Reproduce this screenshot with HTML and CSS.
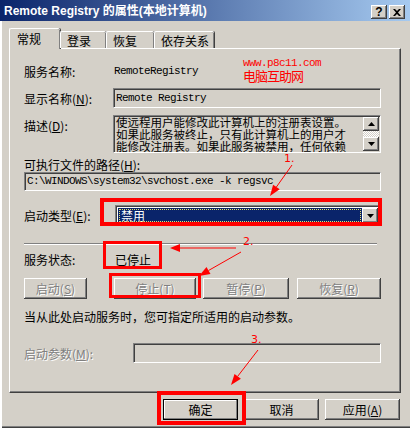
FILE: index.html
```html
<!DOCTYPE html>
<html lang="zh-CN">
<head>
  <meta charset="UTF-8" />
  <title>Remote Registry 的属性(本地计算机)</title>
  <link rel="stylesheet" href="styles.css">
</head>
<body>
  <div class="window">
    <div class="titlebar">
      <span class="title">Remote Registry 的属性(本地计算机)</span>
      <div class="caption-btns">
        <span class="cbtn help">?</span>
        <span class="cbtn">
          <svg width="8" height="7" viewBox="0 0 8 7"><path d="M0 0h2l2 2 2-2h2L5 3.5 8 7H6L4 5 2 7H0l3-3.5z" fill="#000"/></svg>
        </span>
      </div>
    </div>

    <div class="dlg">
      <div class="tabs">
        <div class="tab active">常规</div>
        <div class="tab">登录</div>
        <div class="tab w48">恢复</div>
        <div class="tab w60">依存关系</div>
      </div>

      <div class="panel">
        <div class="row r-name">
          <span class="lbl">服务名称:</span>
          <span class="mono val">RemoteRegistry</span>
        </div>

        <div class="row r-disp">
          <span class="lbl">显示名称(<u>N</u>):</span>
          <div class="edit mono w-main">Remote Registry</div>
        </div>

        <div class="row r-desc">
          <span class="lbl">描述(<u>D</u>):</span>
          <div class="edit memo w-main">
            <div class="memo-text">
              <div>使远程用户能修改此计算机上的注册表设置。</div>
              <div>如果此服务被终止，只有此计算机上的用户才</div>
              <div>能修改注册表。如果此服务被禁用，任何依赖</div>
            </div>
            <div class="vscroll">
              <span class="sbtn"><svg width="7" height="4" viewBox="0 0 7 4"><path d="M3.5 0L7 4H0z"/></svg></span>
              <span class="track"></span>
              <span class="sbtn"><svg width="7" height="4" viewBox="0 0 7 4"><path d="M0 0h7L3.5 4z"/></svg></span>
            </div>
          </div>
        </div>

        <div class="row r-pathlbl">可执行文件的路径(<u>H</u>):</div>

        <div class="row r-path">
          <div class="edit mono w-full">C:\WINDOWS\system32\svchost.exe -k regsvc</div>
        </div>

        <div class="row r-start">
          <span class="lbl">启动类型(<u>E</u>):</span>
          <div class="combo">
            <div class="combo-sel"><span class="focus">禁用</span></div>
            <span class="sbtn drop"><svg width="7" height="4" viewBox="0 0 7 4"><path d="M0 0h7L3.5 4z"/></svg></span>
          </div>
        </div>

        <div class="sep"></div>

        <div class="row r-status">
          <span class="lbl">服务状态:</span>
          <span class="status">已停止</span>
        </div>

        <div class="row r-btns">
          <span class="btn off b-start">启动(<u>S</u>)</span>
          <span class="btn off b-stop">停止(<u>T</u>)</span>
          <span class="btn off b-pause">暂停(<u>P</u>)</span>
          <span class="btn off b-resume">恢复(<u>R</u>)</span>
        </div>

        <div class="row r-hint">当从此处启动服务时，您可指定所适用的启动参数。</div>

        <div class="row r-params">
          <span class="lbl lbl-wide off">启动参数(<u>M</u>):</span>
          <div class="edit w-param"></div>
        </div>
      </div>

      <div class="actions">
        <span class="btn default">确定</span>
        <span class="btn">取消</span>
        <span class="btn">应用(<u>A</u>)</span>
      </div>
    </div>

    <div class="watermark">
      <div class="mono">www.p8c11.com</div>
      <div class="wm-cn">电脑互助网</div>
    </div>

    <!-- red annotations drawn over the dialog -->
    <svg class="notes" width="410" height="428" viewBox="0 0 410 428">
      <g fill="none" stroke="#f00">
        <rect x="102" y="200" width="278" height="24" stroke-width="4"/>
        <rect x="104.5" y="242.5" width="56" height="25" stroke-width="3"/>
        <rect x="110.5" y="274.5" width="89" height="22" stroke-width="3"/>
        <rect x="159" y="393" width="85" height="30" stroke-width="4"/>
        <path d="M292 165L276.4 187M236 248H179M241 252L208.5 270.5M258 350L237.7 376.3" stroke-width="1"/>
      </g>
      <g fill="#f00">
        <polygon points="270,196 279.7,189.3 273.1,184.7"/>
        <polygon points="170,248 180,244 180,252"/>
        <polygon points="199,276 210.5,274 206.5,267"/>
        <polygon points="231,385 240.9,378.7 234.5,373.9"/>
      </g>
      <g fill="#f00" font-family="DejaVu Sans, sans-serif" font-size="11">
        <text x="284" y="162">1.</text>
        <text x="243" y="245">2.</text>
        <text x="251" y="343">3.</text>
      </g>
    </svg>
  </div>
</body>
</html>
```

FILE: styles.css
```css
* {
  box-sizing: border-box;
}

body {
  margin: 0;
  font-family: "Noto Sans CJK SC", "Liberation Sans", sans-serif;
  font-size: 12px;
  color: #000;
  background-color: #d4d0c8;
}

u {
  text-decoration: underline;
}

.mono {
  font-family: "Liberation Mono", "Noto Sans CJK SC", monospace;
  font-size: 11px;
  letter-spacing: -0.6px;
}

.window {
  position: relative;
  width: 410px;
  height: 428px;
  overflow: hidden;
  background-color: #d4d0c8;
  box-shadow: inset 2px 0 #fff, inset 0 -1px #404040, inset 0 -2px #808080;
}

/* title bar */
.titlebar {
  height: 21px;
  display: flex;
  align-items: center;
  padding-left: 4px;
  background: linear-gradient(to right, #0a246a, #a6caf0);
  color: white;
}

.title {
  font-family: "Liberation Sans", "Noto Sans CJK SC", sans-serif;
  font-weight: bold;
  font-size: 12px;
  line-height: 14px;
  margin-top: 1px;
}

.caption-btns {
  margin-left: auto;
  margin-right: 5px;
  margin-top: 3px;
  display: flex;
  gap: 2px;
}

.cbtn {
  width: 16px;
  height: 14px;
  display: flex;
  align-items: center;
  justify-content: center;
  background-color: #d4d0c8;
  box-shadow: inset -1px -1px #404040, inset 1px 1px #fff, inset -2px -2px #808080;
  color: #000;
}

.cbtn.help {
  font-family: "Liberation Sans", sans-serif;
  font-weight: bold;
  font-size: 12px;
  line-height: 14px;
}

/* dialog body */
.dlg {
  padding: 7px 9px 0;
}

.tabs {
  display: flex;
  align-items: flex-end;
  height: 20px;
  position: relative;
  z-index: 1;
}

.tab {
  width: 46px;
  height: 17px;
  padding: 1px 0 0 6px;
  line-height: 15px;
  border-top: 1px solid #fff;
  border-left: 1px solid #fff;
  border-radius: 2px 2px 0 0;
  box-shadow: inset -1px 0 #808080, 1px 0 #404040;
}

.tab.w48 {
  width: 48px;
}

.tab.w60 {
  width: 60px;
}

.tab.active {
  width: 51px;
  height: 21px;
  padding: 2px 0 0 7px;
  margin-bottom: -1px;
  background-color: #d4d0c8;
}

.panel {
  height: 345px;
  padding-left: 14px;
  border-top: 1px solid #fff;
  border-left: 1px solid #fff;
  border-right: 1px solid #404040;
  border-bottom: 1px solid #404040;
  box-shadow: inset -1px -1px #808080;
  display: flex;
  flex-direction: column;
}

.row {
  display: flex;
  align-items: center;
  flex: none;
}

.lbl {
  width: 89px;
  flex: none;
}

.lbl-wide {
  width: 109px;
}

.off {
  color: #808080;
  text-shadow: 1px 1px #fff;
}

.r-name {
  margin-top: 12px;
  height: 20px;
}

.val {
  padding-left: 1px;
}

.r-disp {
  margin-top: 7px;
  height: 20px;
}

.edit {
  height: 100%;
  border: 1px solid;
  border-color: #808080 #fff #fff #808080;
  box-shadow: inset 1px 1px #404040, inset -1px -1px #d4d0c8;
  padding: 3px 0 0 2px;
  white-space: nowrap;
  overflow: hidden;
}

.w-main {
  width: 268px;
}

.w-full {
  width: 357px;
}

.w-param {
  width: 248px;
}

.r-desc {
  margin-top: 7px;
  height: 38px;
  align-items: flex-start;
}

.r-desc .lbl {
  padding-top: 2px;
}

.memo {
  display: flex;
  padding: 0 1px 0 2px;
}

.memo-text {
  flex: 1;
  font-size: 11.5px;
  line-height: 12px;
}

.vscroll {
  width: 16px;
  height: 34px;
  margin-top: 1px;
  display: flex;
  flex-direction: column;
}

.sbtn {
  width: 16px;
  height: 14px;
  display: flex;
  align-items: center;
  justify-content: center;
  background-color: #d4d0c8;
  box-shadow: inset -1px -1px #404040, inset 1px 1px #fff, inset -2px -2px #808080;
}

.track {
  flex: 1;
  background: repeating-conic-gradient(#fff 0 25%, #d4d0c8 0 50%) 0 0 / 2px 2px;
}

.r-pathlbl {
  margin-top: 4px;
  height: 14px;
}

.r-path {
  margin-top: 1px;
  height: 19px;
}

.r-path .edit {
  padding-top: 2px;
}

.r-start {
  margin-top: 14px;
  height: 21px;
}

.combo {
  width: 266px;
  height: 21px;
  margin-left: 2px;
  display: flex;
  padding: 2px;
  border: 1px solid;
  border-color: #808080 #fff #fff #808080;
  box-shadow: inset 1px 1px #404040;
  background-color: #fff;
}

.combo-sel {
  flex: 1;
  background-color: #0a246a;
  color: white;
  padding: 1px;
}

.focus {
  display: block;
  height: 100%;
  outline: 1px dotted #e8e070;
  outline-offset: -1px;
  padding-left: 2px;
  line-height: 14px;
}

.drop {
  height: 15px;
}

.sep {
  margin-top: 17px;
  width: 353px;
  height: 2px;
  border-top: 1px solid #808080;
  border-bottom: 1px solid #fff;
}

.r-status {
  margin-top: 4px;
  height: 20px;
}

.status {
  padding-left: 2px;
}

.r-btns {
  margin-top: 9px;
  height: 21px;
}

.btn {
  width: 75px;
  height: 21px;
  display: flex;
  align-items: center;
  justify-content: center;
  background-color: #d4d0c8;
  box-shadow: inset -1px -1px #404040, inset 1px 1px #fff, inset -2px -2px #808080;
}

.b-start {
  width: 63px;
}

.b-stop {
  width: 82px;
  margin-left: 27px;
}

.b-pause {
  width: 86px;
  margin-left: 7px;
}

.b-resume {
  width: 84px;
  margin-left: 8px;
}

.r-hint {
  margin-top: 9px;
  height: 16px;
}

.r-params {
  margin-top: 19px;
  height: 20px;
}

.actions {
  display: flex;
  justify-content: flex-end;
  gap: 6px;
  margin-top: 6px;
  padding-right: 1px;
}

.btn.default {
  border: 1px solid #000;
  box-shadow: inset -1px -1px #808080, inset 1px 1px #fff;
}

/* overlays */
.watermark {
  position: absolute;
  left: 243px;
  top: 57px;
  color: #f00;
  line-height: 12px;
}

.wm-cn {
  font-size: 13px;
  line-height: 14px;
  letter-spacing: -1px;
}

.notes {
  position: absolute;
  left: 0;
  top: 0;
  pointer-events: none;
}
```
